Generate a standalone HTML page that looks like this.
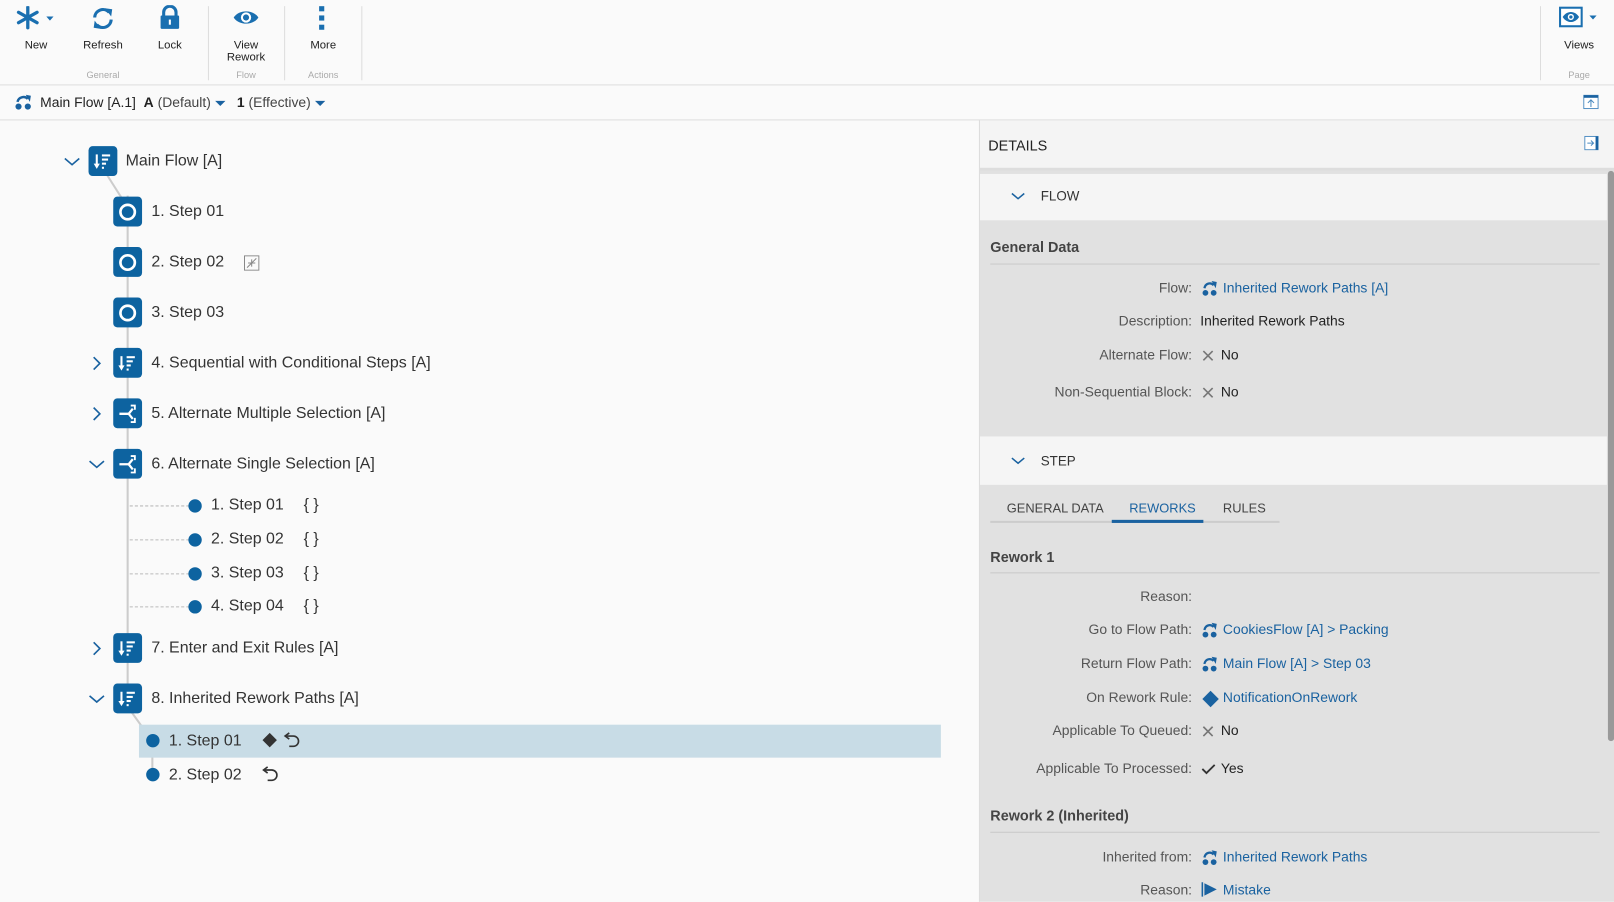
<!DOCTYPE html>
<html><head><meta charset="utf-8"><style>
*{margin:0;padding:0;box-sizing:border-box}
html,body{width:1614px;height:902px;overflow:hidden;background:#fafafa}
body{font-family:"Liberation Sans",Arial,sans-serif;color:#333}
#w{position:absolute;left:0;top:0;width:1568px;height:876px;transform:scale(1.0294);transform-origin:0 0;background:#fafafa}
.a{position:absolute;white-space:nowrap}
.t{font-size:15.5px;line-height:20px;color:#333}
.tb{font-size:11px;color:#222;text-align:center;width:70px;line-height:12px}
.gl{font-size:9px;color:#aaa;text-align:center;line-height:10px}
.sep{position:absolute;top:6px;width:1px;height:72px;background:#ddd}
.bi{position:absolute;width:28px;height:29px;border-radius:4px;background:#0d63a0}
.dot{position:absolute;width:13px;height:13px;border-radius:50%;background:#0d63a0}
.dash{position:absolute;height:0;border-top:1.5px dashed #bbb}
.lab{position:absolute;right:410px;font-size:13.5px;color:#555;line-height:18px;text-align:right}
.val{position:absolute;left:1166px;font-size:13.5px;line-height:18px;color:#222}
.lnk{color:#1a62a0}
.h{position:absolute;left:962px;font-size:14px;font-weight:bold;color:#444}
.hl{position:absolute;left:962px;width:592px;height:1px;background:#c9c9c9}
.dd{display:inline-block;width:0;height:0;border-left:5px solid transparent;border-right:5px solid transparent;border-top:5px solid #1a62a0;vertical-align:middle;margin-left:4px}
</style></head><body><div id="w">

<!-- toolbar -->
<div class="a" style="left:0;top:0;width:1568px;height:83px;background:#fafafa;border-bottom:1px solid #ddd"></div>
<svg class="a" style="left:14px;top:6px" width="42" height="24" viewBox="0 0 42 24"><g stroke="#1a6fb0" stroke-width="3.2" stroke-linecap="round"><line x1="13" y1="1" x2="13" y2="21"/><line x1="4" y1="6" x2="22" y2="16"/><line x1="4" y1="16" x2="22" y2="6"/></g><path d="M31 10h7l-3.5 4z" fill="#1a6fb0"/></svg>
<div class="a tb" style="left:0;top:38px">New</div>
<svg class="a" style="left:88px;top:6px" width="24" height="24" viewBox="0 0 24 24"><g fill="none" stroke="#1a6fb0" stroke-width="3"><path d="M4 11a8 8 0 0 1 14-5"/><path d="M20 13a8 8 0 0 1-14 5"/></g><path d="M14 2l7 1-1 7z M10 22l-7-1 1-7z" fill="#1a6fb0"/></svg>
<div class="a tb" style="left:65px;top:38px">Refresh</div>
<svg class="a" style="left:154px;top:5px" width="22" height="24" viewBox="0 0 22 24"><path d="M5 11V7a6 6 0 0 1 12 0v4" fill="none" stroke="#1a6fb0" stroke-width="3"/><rect x="2" y="10" width="18" height="13" rx="1" fill="#1a6fb0"/><rect x="10" y="14" width="2" height="5" fill="#fff"/></svg>
<div class="a tb" style="left:130px;top:38px">Lock</div>
<div class="a gl" style="left:65px;top:68px;width:70px">General</div>
<div class="sep" style="left:202px"></div>
<svg class="a" style="left:226px;top:8px" width="26" height="18" viewBox="0 0 26 18"><path d="M1 9C6 1 20 1 25 9C20 17 6 17 1 9z" fill="#1a6fb0"/><circle cx="13" cy="9" r="5" fill="#fff"/><circle cx="13" cy="9" r="3" fill="#1a6fb0"/></svg>
<div class="a tb" style="left:204px;top:38px">View<br>Rework</div>
<div class="a gl" style="left:204px;top:68px;width:70px">Flow</div>
<div class="sep" style="left:276px"></div>
<svg class="a" style="left:309px;top:5px" width="8" height="24"><rect x="1" y="1" width="5" height="5" fill="#1a6fb0"/><rect x="1" y="10" width="5" height="5" fill="#1a6fb0"/><rect x="1" y="19" width="5" height="5" fill="#1a6fb0"/></svg>
<div class="a tb" style="left:279px;top:38px">More</div>
<div class="a gl" style="left:279px;top:68px;width:70px">Actions</div>
<div class="sep" style="left:351px"></div>
<div class="sep" style="left:1496px"></div>
<svg class="a" style="left:1514px;top:6px" width="42" height="22" viewBox="0 0 42 22"><rect x="1.5" y="1.5" width="21" height="18" fill="#fff" stroke="#1a6fb0" stroke-width="2"/><path d="M4 10.5C8 4 16 4 20 10.5C16 17 8 17 4 10.5z" fill="#1a6fb0"/><circle cx="12" cy="10.5" r="3" fill="#fff"/><circle cx="12" cy="10.5" r="1.6" fill="#1a6fb0"/><path d="M30 9h7l-3.5 4z" fill="#1a6fb0"/></svg>
<div class="a tb" style="left:1499px;top:38px">Views</div>
<div class="a gl" style="left:1499px;top:68px;width:70px">Page</div>

<!-- breadcrumb -->
<div class="a" style="left:0;top:84px;width:1568px;height:33px;background:#fafafa;border-bottom:1px solid #ddd"></div>
<svg class="a" style="left:14px;top:91px" width="18" height="16" viewBox="0 0 18 16"><circle cx="4" cy="12.5" r="3" fill="#1a62a0"/><circle cx="13" cy="12.5" r="3" fill="#1a62a0"/><path d="M3 8C4 3 10 2 13 5" fill="none" stroke="#1a62a0" stroke-width="2.4"/><path d="M11 1l5 1-1 6z" fill="#1a62a0"/></svg>
<div class="a" style="left:39px;top:91px;font-size:13.5px;line-height:18px;color:#222">Main Flow [A.1]&nbsp;&nbsp;<b>A</b> <span style="color:#444">(Default)</span><span class="dd"></span>&nbsp;&nbsp;&nbsp;<b>1</b> <span style="color:#444">(Effective)</span><span class="dd"></span></div>
<svg class="a" style="left:1538px;top:92px" width="15" height="14"><rect x="0.5" y="0.5" width="14" height="13" fill="#fff" stroke="#4a8ac0"/><rect x="0.5" y="0.5" width="14" height="2.5" fill="#1a62a0"/><path d="M7.5 5v7M4.5 8l3-3 3 3" fill="none" stroke="#4a8ac0"/></svg>

<!-- tree lines -->
<svg class="a" style="left:0;top:0" width="950" height="876">
<line x1="124" y1="190" x2="124" y2="680" stroke="#ccc" stroke-width="2"/>
<line x1="104" y1="170" x2="118" y2="192" stroke="#ccc" stroke-width="2"/>
<line x1="128" y1="692" x2="148" y2="720" stroke="#ccc" stroke-width="2"/>
<line x1="148" y1="720" x2="148" y2="752" stroke="#ccc" stroke-width="2"/>
</svg>
<div class="a" style="left:135px;top:704px;width:779px;height:32px;background:#c8dce6"></div>
<div class="dash" style="left:126px;top:491px;width:58px"></div>
<div class="dash" style="left:126px;top:524px;width:58px"></div>
<div class="dash" style="left:126px;top:557px;width:58px"></div>
<div class="dash" style="left:126px;top:589px;width:58px"></div>

<!-- chevrons -->
<svg class="a" style="left:0;top:0" width="120" height="700" fill="none" stroke="#1a62a0" stroke-width="1.6">
<path d="M63 154l7 6 7-6"/>
<path d="M91 347l6 6-6 6"/><path d="M91 396l6 6-6 6"/>
<path d="M87 448l7 6 7-6"/>
<path d="M91 624l6 6-6 6"/>
<path d="M87 676l7 6 7-6"/>
</svg>

<!-- icons -->
<div class="bi" style="left:86px;top:142px"></div>
<div class="bi" style="left:110px;top:191px"></div><div class="bi" style="left:110px;top:240px"></div><div class="bi" style="left:110px;top:289px"></div>
<div class="bi" style="left:110px;top:338px"></div><div class="bi" style="left:110px;top:387px"></div><div class="bi" style="left:110px;top:436px"></div>
<div class="bi" style="left:110px;top:615px"></div><div class="bi" style="left:110px;top:664px"></div>
<svg class="a" style="left:0;top:0" width="150" height="700">
<defs>
<g id="seq" fill="#fff"><rect x="-7" y="-7" width="2" height="10"/><path d="M-9 2h6l-3 5z"/><rect x="-1" y="-7" width="8" height="2"/><rect x="-1" y="-3" width="6" height="2"/><rect x="-1" y="1" width="4" height="2"/><rect x="-1" y="5" width="2" height="2"/></g>
<g id="alt" fill="none" stroke="#fff" stroke-width="2.2"><path d="M-8 1h9l4-5M1 1l4 5"/><path d="M3 -7h4v4M3 9h4v-4" stroke-width="1.8"/></g>
<g id="st"><circle r="7" fill="none" stroke="#fff" stroke-width="2.6"/></g>
</defs>
<use href="#seq" x="100" y="157"/>
<use href="#st" x="124" y="206"/><use href="#st" x="124" y="255"/><use href="#st" x="124" y="304"/>
<use href="#seq" x="124" y="353"/><use href="#alt" x="124" y="401"/><use href="#alt" x="124" y="450"/>
<use href="#seq" x="124" y="630"/><use href="#seq" x="124" y="679"/>
</svg>
<div class="dot" style="left:183px;top:485px"></div><div class="dot" style="left:183px;top:518px"></div>
<div class="dot" style="left:183px;top:551px"></div><div class="dot" style="left:183px;top:583px"></div>
<div class="dot" style="left:142px;top:713px"></div><div class="dot" style="left:142px;top:746px"></div>

<div class="a t" style="left:122px;top:147px">Main Flow [A]</div>
<div class="a t" style="left:147px;top:196px">1. Step 01</div>
<div class="a t" style="left:147px;top:245px">2. Step 02</div>
<svg class="a" style="left:237px;top:248px" width="15" height="15"><rect x="0.5" y="0.5" width="14" height="14" fill="none" stroke="#888"/><path d="M3 12L12 3M7.5 4v7M4 7.5h7" stroke="#888"/></svg>
<div class="a t" style="left:147px;top:294px">3. Step 03</div>
<div class="a t" style="left:147px;top:343px">4. Sequential with Conditional Steps [A]</div>
<div class="a t" style="left:147px;top:392px">5. Alternate Multiple Selection [A]</div>
<div class="a t" style="left:147px;top:441px">6. Alternate Single Selection [A]</div>
<div class="a t" style="left:205px;top:481px">1. Step 01</div><div class="a t" style="left:295px;top:481px">{ }</div>
<div class="a t" style="left:205px;top:514px">2. Step 02</div><div class="a t" style="left:295px;top:514px">{ }</div>
<div class="a t" style="left:205px;top:547px">3. Step 03</div><div class="a t" style="left:295px;top:547px">{ }</div>
<div class="a t" style="left:205px;top:579px">4. Step 04</div><div class="a t" style="left:295px;top:579px">{ }</div>
<div class="a t" style="left:147px;top:620px">7. Enter and Exit Rules [A]</div>
<div class="a t" style="left:147px;top:669px">8. Inherited Rework Paths [A]</div>
<div class="a t" style="left:164px;top:710px">1. Step 01</div>
<svg class="a" style="left:254px;top:711px" width="40" height="16" fill="none"><path d="M1 8l7-7 7 7-7 7z" fill="#333"/><path d="M24 4h7a5 5 0 0 1 0 10h-4" stroke="#333" stroke-width="1.6"/><path d="M27 1l-4 3 4 3" stroke="#333" stroke-width="1.6"/></svg>
<div class="a t" style="left:164px;top:743px">2. Step 02</div>
<svg class="a" style="left:254px;top:744px" width="18" height="16" fill="none"><path d="M3 4h7a5 5 0 0 1 0 10h-4" stroke="#333" stroke-width="1.6"/><path d="M6 1l-4 3 4 3" stroke="#333" stroke-width="1.6"/></svg>

<!-- details -->
<div class="a" style="left:951px;top:117px;width:617px;height:759px;background:#e1e1e1;border-left:1px solid #ddd"></div>
<div class="a" style="left:952px;top:117px;width:616px;height:49px;background:#f4f4f4;border-bottom:3px solid #ddd"></div>
<div class="a" style="left:960px;top:132px;font-size:14px;color:#222;line-height:18px">DETAILS</div>
<svg class="a" style="left:1539px;top:132px" width="14" height="14"><rect x="0.5" y="0.5" width="13" height="13" fill="#fff" stroke="#4a8ac0"/><rect x="11" y="0.5" width="2.5" height="13" fill="#1a62a0"/><path d="M3 7h6M6.5 4.5L9 7l-2.5 2.5" fill="none" stroke="#4a8ac0"/></svg>
<div class="a" style="left:952px;top:169px;width:609px;height:45px;background:#f5f5f5"></div>
<svg class="a" style="left:982px;top:187px" width="14" height="8"><path d="M1 1l6 5 6-5" fill="none" stroke="#1a62a0" stroke-width="1.5"/></svg>
<div class="a" style="left:1011px;top:183px;font-size:13px;color:#333;line-height:16px">FLOW</div>
<div class="a" style="left:1562px;top:166px;width:6px;height:554px;background:#999;border-radius:3px"></div>

<div class="h" style="top:232px">General Data</div>
<div class="hl" style="top:256px"></div>
<div class="lab" style="top:271px">Flow:</div>
<div class="val lnk" style="top:271px;left:1188px">Inherited Rework Paths [A]</div>
<div class="lab" style="top:303px">Description:</div>
<div class="val" style="top:303px">Inherited Rework Paths</div>
<div class="lab" style="top:336px">Alternate Flow:</div>
<div class="val" style="top:336px;left:1186px">No</div>
<div class="lab" style="top:372px">Non-Sequential Block:</div>
<div class="val" style="top:372px;left:1186px">No</div>

<div class="a" style="left:952px;top:424px;width:609px;height:47px;background:#f5f5f5"></div>
<svg class="a" style="left:982px;top:444px" width="14" height="8"><path d="M1 1l6 5 6-5" fill="none" stroke="#1a62a0" stroke-width="1.5"/></svg>
<div class="a" style="left:1011px;top:440px;font-size:13px;color:#333;line-height:16px">STEP</div>

<div class="a" style="left:962px;top:506px;width:281px;height:2px;background:#ccc"></div>
<div class="a" style="left:1080px;top:505px;width:89px;height:3px;background:#1a62a0"></div>
<div class="a" style="left:978px;top:486px;font-size:12.5px;color:#444;line-height:16px">GENERAL DATA</div>
<div class="a" style="left:1097px;top:486px;font-size:12.5px;color:#1a62a0;line-height:16px">REWORKS</div>
<div class="a" style="left:1188px;top:486px;font-size:12.5px;color:#444;line-height:16px">RULES</div>

<div class="h" style="top:533px">Rework 1</div>
<div class="hl" style="top:556px"></div>
<div class="lab" style="top:571px">Reason:</div>
<div class="lab" style="top:603px">Go to Flow Path:</div>
<div class="val lnk" style="top:603px;left:1188px">CookiesFlow [A] &gt; Packing</div>
<div class="lab" style="top:636px">Return Flow Path:</div>
<div class="val lnk" style="top:636px;left:1188px">Main Flow [A] &gt; Step 03</div>
<div class="lab" style="top:669px">On Rework Rule:</div>
<div class="val lnk" style="top:669px;left:1188px">NotificationOnRework</div>
<div class="lab" style="top:701px">Applicable To Queued:</div>
<div class="val" style="top:701px;left:1186px">No</div>
<div class="lab" style="top:738px">Applicable To Processed:</div>
<div class="val" style="top:738px;left:1186px">Yes</div>

<div class="h" style="top:784px">Rework 2 (Inherited)</div>
<div class="hl" style="top:808px"></div>
<div class="lab" style="top:824px">Inherited from:</div>
<div class="val lnk" style="top:824px;left:1188px">Inherited Rework Paths</div>
<div class="lab" style="top:856px">Reason:</div>
<div class="val lnk" style="top:856px;left:1188px">Mistake</div>

<svg class="a" style="left:1166px;top:271px" width="20" height="600">
<defs><g id="fl"><circle cx="4" cy="12.5" r="2.8" fill="#1a62a0"/><circle cx="12" cy="12.5" r="2.8" fill="#1a62a0"/><path d="M3 8C4 3 9 2 12 5" fill="none" stroke="#1a62a0" stroke-width="2.2"/><path d="M10 1l5 1-1 6z" fill="#1a62a0"/></g>
<g id="x" stroke="#777" stroke-width="1.6"><path d="M3 3l9 9M12 3l-9 9"/></g></defs>
<use href="#fl" x="1" y="1"/>
<use href="#x" y="67"/><use href="#x" y="103"/>
<use href="#fl" x="1" y="333"/><use href="#fl" x="1" y="366"/>
<path d="M10 400l8 8-8 8-8-8z" fill="#1a62a0"/>
<use href="#x" y="432"/>
<path d="M2 476l4 4 8-8" fill="none" stroke="#333" stroke-width="1.8"/>
<use href="#fl" x="1" y="554"/>
<path d="M2 586v18" stroke="#1a62a0" stroke-width="1.5"/><path d="M4 587l12 6-12 6z" fill="#1a62a0"/>
</svg>

</div></body></html>
